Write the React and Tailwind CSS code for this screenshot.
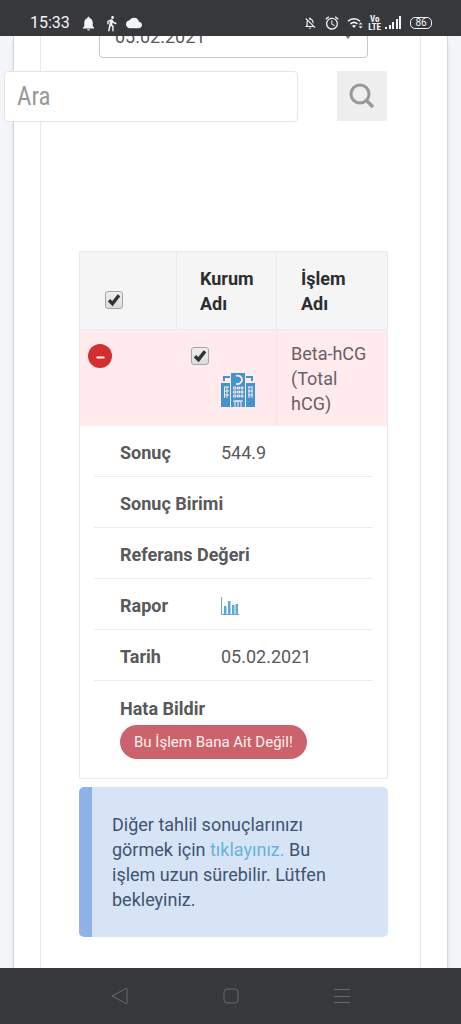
import { useState } from 'react';
import { Minus } from 'lucide-react';
import { MdAlarm, MdCloud, MdDirectionsWalk, MdNotifications, MdOutlineNotificationsOff } from 'react-icons/md';

const DETAILS = [
  { label: 'Sonuç', value: '544.9' },
  { label: 'Sonuç Birimi', value: '' },
  { label: 'Referans Değeri', value: '' },
  { label: 'Rapor', value: <ReportIcon /> },
  { label: 'Tarih', value: '05.02.2021' },
];

function WifiIcon() {
  return (
    <svg width="17" height="14" viewBox="0 0 17 14" fill="none" stroke="currentColor" strokeWidth="1.6">
      <path d="M1 5.2C4.4 1.9 9.6 1.9 13 5.2" />
      <path d="M3.4 8C5.6 6 8.4 6 10.4 7.8" />
      <path d="M5 9.8C6.2 8.8 7.8 8.8 9 9.8L7 12Z" fill="currentColor" stroke="none" />
      <path d="M11.6 8.6L13.6 6.4L15.6 8.6ZM11.6 10.2L13.6 12.4L15.6 10.2Z" fill="currentColor" stroke="none" />
    </svg>
  );
}

function SignalIcon() {
  return (
    <svg width="17" height="14" viewBox="0 0 17 14" fill="currentColor">
      <rect x="0" y="11" width="2" height="2" />
      <rect x="4" y="9" width="2" height="4" />
      <rect x="7" y="6" width="2" height="7" />
      <rect x="11" y="3" width="2" height="10" />
      <rect x="14" y="0" width="2" height="13" />
    </svg>
  );
}

function HospitalIcon() {
  return (
    <svg width="34" height="34" viewBox="0 0 34 34" fill="#4393cf">
      <path d="M10 0H24V34H10Z" />
      <path d="M0 10H9V34H0ZM25 10H34V34H25Z" />
      <path d="M3 8V4H9M31 8V4H25" fill="none" stroke="#4393cf" strokeWidth="2" />
      <path d="M15 3A4.200 4.200 0 1 1 15 10.600" fill="none" stroke="#ffebee" strokeWidth="1.800" />
      <g fill="none" stroke="#ffebee">
        <path d="M12.500 14H15V16H12.500ZM16.500 14H18.500V16H16.500ZM20 14H22V16H20ZM12.500 18H15V20H12.500ZM16.500 18H18.500V20H16.500ZM20 18H22V20H20ZM12.500 22H15V24H12.500ZM16.500 22H18.500V24H16.500ZM20 22H22V24H20Z" />
        <path d="M3 14H8M3 18H8M3 22H8M3.500 14V25M6 14V25M27 14H32M27 18H32M27 22H32M28 14V25M31 14V25" />
        <path d="M14 34V28H20V34M17 28V34M12 28H22" />
      </g>
    </svg>
  );
}

function ReportIcon() {
  return (
    <svg width="18" height="20" viewBox="0 0 18 20" fill="#5aa9d6" role="img" aria-label="Rapor">
      <path d="M0 1H1V18H18V19H0Z" />
      <path d="M3 10H5.500V18H3ZM7 5H9.500V18H7ZM11 9H13.500V18H11ZM14.500 8H17V18H14.500Z" />
    </svg>
  );
}

function StatusBar() {
  return (
    <header className="z-10 flex h-9 shrink-0 items-end justify-between bg-[#37383c] pr-[29px] pb-1 pl-[30px] text-gray-100">
      <div className="flex h-[18px] items-center gap-[6px]">
        <span className="mr-1 text-[16px] leading-[18px]">15:33</span>
        <MdNotifications size={17} />
        <MdDirectionsWalk size={17} />
        <MdCloud size={16} />
      </div>
      <div className="flex h-[18px] items-center gap-1">
        <MdOutlineNotificationsOff size={14} />
        <span className="mx-[3px]"><MdAlarm size={16} /></span>
        <WifiIcon />
        <span className="text-center font-['Roboto_Condensed',Roboto,sans-serif] text-[9px] leading-[8px] font-bold">Vo<br />LTE</span>
        <SignalIcon />
        <span className="ml-1 flex h-3 w-[22px] items-center justify-center rounded-[5px] border border-gray-100 text-[10px] leading-[10px]">86</span>
      </div>
    </header>
  );
}

function CheckBox({ label, checked, onChange }) {
  return (
    <label className="relative block size-[18px]">
      <input
        type="checkbox"
        aria-label={label}
        checked={checked}
        onChange={onChange}
        className="block size-[18px] appearance-none rounded-[3px] border border-[#a5a5a5] bg-linear-to-b from-[#efefef] to-[#dcdcdc]"
      />
      {checked && (
        <svg className="pointer-events-none absolute inset-0" width="18" height="18" viewBox="0 0 18 18" fill="none" stroke="#333" strokeWidth="3.4">
          <path d="M4 9.200L7.500 12.600L14 4.200" />
        </svg>
      )}
    </label>
  );
}

function ResultsTable() {
  const [all, setAll] = useState(true);
  const [selected, setSelected] = useState(true);
  const [open, setOpen] = useState(true);

  return (
    <table className="mt-[129px] w-full table-fixed border-separate border-spacing-0 border border-[#e9eaeb] text-left text-[18px] leading-[25px]">
      <thead className="bg-[#f5f5f5] text-[#2c2e30]">
        <tr>
          <th className="w-[97px] border-r border-b border-[#e9ecec] pb-5 pl-[25px] align-bottom">
            <CheckBox label="Tümünü seç" checked={all} onChange={() => setAll(!all)} />
          </th>
          <th className="w-[100px] border-r border-b border-[#e9ecec] pt-[14px] pr-4 pb-[13px] pl-[23px] font-bold">Kurum Adı</th>
          <th className="border-b border-[#e9ecec] pt-[14px] pr-8 pb-[13px] pl-6 font-bold">İşlem Adı</th>
        </tr>
      </thead>
      <tbody>
        <tr className="bg-[#ffebee] text-[#6b5f64]">
          <td className="pt-[14px] pl-2 align-top">
            <button
              type="button"
              aria-label="Detay"
              onClick={() => setOpen(!open)}
              className="flex size-6 items-center justify-center rounded-full bg-[#d32f2f] pt-0.5 text-white"
            >
              <Minus size={11} strokeWidth={4} />
            </button>
          </td>
          <td className="border-r border-[#f7e2e6] pt-[17px] pl-[14px] align-top">
            <CheckBox label="Seç" checked={selected} onChange={() => setSelected(!selected)} />
            <div className="mt-2 ml-[30px]"><HospitalIcon /></div>
          </td>
          <td className="pt-[11px] pr-4 pb-[10px] pl-[14px]">Beta-hCG (Total hCG)</td>
        </tr>
        {open && (
          <tr>
            <td colSpan={3} className="px-[14px] pb-[19px] text-[#58595b]">
              <dl>
                {DETAILS.map((item) => (
                  <div key={item.label} className="flex items-center border-b border-[#ebecee] pt-[14px] pb-[11px] pl-[26px]">
                    <dt className="min-w-[101px] font-bold">{item.label}</dt>
                    <dd>{item.value}</dd>
                  </div>
                ))}
              </dl>
              <div className="pt-[15px] pl-[26px]">
                <div className="font-bold">Hata Bildir</div>
                <button type="button" className="mt-1 block h-[34px] rounded-full bg-[#cb636d] px-[14px] text-[15px] leading-[20px] text-[#fff0ee]">
                  Bu İşlem Bana Ait Değil!
                </button>
              </div>
            </td>
          </tr>
        )}
      </tbody>
    </table>
  );
}

function NavBar() {
  return (
    <nav className="z-10 flex h-14 shrink-0 items-center bg-[#37383c] px-16 text-[#68696d]">
      <button type="button" aria-label="Geri" className="flex flex-1 justify-center">
        <svg width="18" height="18" viewBox="0 0 18 18" fill="none" stroke="currentColor" strokeLinejoin="round">
          <path d="M1 9L16 1V17Z" />
        </svg>
      </button>
      <button type="button" aria-label="Ana ekran" className="flex flex-1 justify-center">
        <svg width="16" height="16" viewBox="0 0 16 16" fill="none" stroke="currentColor">
          <rect x="1" y="1" width="14" height="14" rx="3" />
        </svg>
      </button>
      <button type="button" aria-label="Menü" className="flex flex-1 justify-center">
        <svg width="16" height="16" viewBox="0 0 16 16" fill="none" stroke="currentColor">
          <path d="M0 1.500H16M0 8.500H16M0 14.500H16" />
        </svg>
      </button>
    </nav>
  );
}

export default function App() {
  return (
    <div className="flex h-screen flex-col bg-[#f4f5f9] font-[Roboto,sans-serif]">
      <StatusBar />
      <main className="flex min-h-0 flex-1 flex-col overflow-hidden px-[13px]">
        <div className="flex-1 border-x border-[#d3d6da] bg-white px-[26px] shadow-md">
          <div className="flow-root h-full border-x border-[#e9eaec] pr-8 pl-[38px]">
            <div className="relative mx-5 -mt-[22px]">
              <select
                aria-label="Tarih"
                className="block h-11 w-full appearance-none rounded-[4px] border border-[#c3c9c9] bg-white px-[15px] text-[18px] leading-[25px] text-[#58595b]"
              >
                <option>05.02.2021</option>
              </select>
              <svg className="pointer-events-none absolute top-5 right-4" width="8" height="6" viewBox="0 0 8 6" fill="#777">
                <path d="M0 0H8L4 5Z" />
              </svg>
            </div>

            <form className="mt-[13px] mr-px -ml-[75px] flex justify-between gap-[39px]" onSubmit={(e) => e.preventDefault()}>
              <input
                type="text"
                aria-label="Ara"
                placeholder="Ara"
                className="h-[51px] min-w-0 flex-1 rounded-[4px] border border-[#e3e4e6] bg-white px-3 font-['Roboto_Condensed',Roboto,sans-serif] text-[25px] leading-[30px] placeholder:text-[#999]"
              />
              <button type="submit" aria-label="Ara" className="flex size-[50px] items-center justify-center bg-[#eee]">
                <svg width="26" height="26" viewBox="0 0 26 26" fill="none" stroke="#999" strokeWidth="3">
                  <circle cx="11" cy="11" r="9" />
                  <path d="M17.500 17.500L24 24" strokeWidth="3.500" />
                </svg>
              </button>
            </form>

            <ResultsTable />

            <div className="mt-2 rounded-[5px] border-l-[13px] border-[#8fb3e8] bg-[#d7e4f6] py-[25px] pr-10 pl-5 text-[18px] leading-[25px] text-[#3f5372]">
              Diğer tahlil sonuçlarınızı görmek için <a href="#" className="text-[#67b3d8]">tıklayınız.</a> Bu işlem uzun sürebilir. Lütfen bekleyiniz.
            </div>
          </div>
        </div>
      </main>
      <NavBar />
    </div>
  );
}
